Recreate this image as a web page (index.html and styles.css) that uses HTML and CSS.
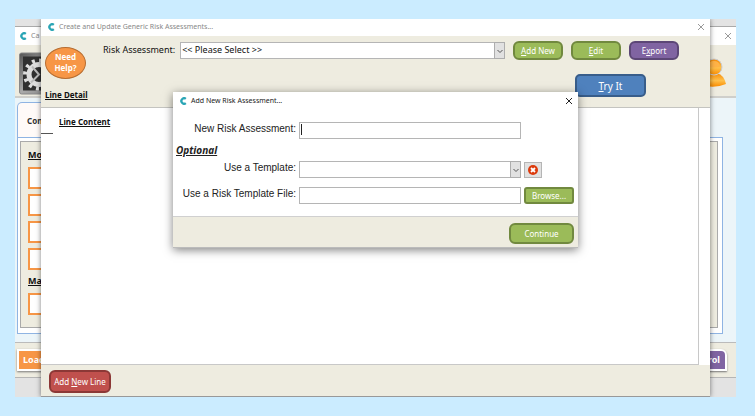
FILE: index.html
```html
<!DOCTYPE html>
<html lang="en">
<head>
<meta charset="UTF-8">
<meta name="viewport" content="width=device-width, initial-scale=1.0">
<title>Create and Update Generic Risk Assessments</title>
<link rel="stylesheet" href="styles.css">
</head>
<body>
    <div class="desktop">

        <!-- Window at the back -->
        <div class="window back-window">
            <div class="titlebar back-title">
                <svg class="logo" viewBox="0 0 8 8"><path d="M6.8 1.9A2.7 2.7 0 1 0 6.8 6.1" fill="none" stroke="#2aa5b5" stroke-width="2.3"/></svg>
                <span class="title">Ca</span>
                <button class="close" aria-label="Close"><svg viewBox="0 0 8 8"><path d="M1 1L7 7M7 1L1 7"/></svg></button>
            </div>
            <div class="back-header">
                <svg class="gear" viewBox="0 0 42 42">
                    <defs>
                        <linearGradient id="frame" x1="0" y1="0" x2="1" y2="1"><stop offset="0" stop-color="#555"/><stop offset="0.5" stop-color="#aaa"/><stop offset="1" stop-color="#777"/></linearGradient>
                    </defs>
                    <rect x="0.5" y="0.5" width="41" height="41" rx="2" fill="url(#frame)" stroke="#888"/>
                    <rect x="4" y="4" width="34" height="34" fill="#303030"/>
                    <circle cx="20" cy="22" r="10" fill="none" stroke="#ddd" stroke-width="5"/>
                    <circle cx="20" cy="22" r="14" fill="none" stroke="#ddd" stroke-width="4" stroke-dasharray="3 4.3"/>
                    <path d="M13 14L20 22L12 30" fill="none" stroke="#bbb" stroke-width="2"/>
                </svg>
                <svg class="user" viewBox="0 0 28 30">
                    <defs>
                        <linearGradient id="orange" x1="0" y1="0" x2="0" y2="1"><stop offset="0" stop-color="#f58a07"/><stop offset="0.55" stop-color="#ffc04a"/><stop offset="1" stop-color="#fb8c00"/></linearGradient>
                    </defs>
                    <path d="M2 27Q5 17 11 15H17Q24 17 26 26Q14 31 2 27Z" fill="url(#orange)"/>
                    <circle cx="14" cy="9" r="8" fill="url(#orange)" stroke="#c9ccd2"/>
                    <path d="M8 8Q9 3 14 3T20 8Q14 11 8 8Z" fill="#ffb347"/>
                </svg>
            </div>
            <div class="back-body">
                <div class="tab">Con</div>
                <div class="tab-panel">
                    <div class="tab-page">
                        <h3 class="group-title">Mo</h3>
                        <div class="tile"></div>
                        <div class="tile"></div>
                        <div class="tile"></div>
                        <div class="tile"></div>
                        <h3 class="group-title">Ma</h3>
                        <div class="tile"></div>
                    </div>
                </div>
            </div>
            <div class="back-footer">
                <button class="flat-button load">Load</button>
                <button class="flat-button control">Control</button>
            </div>
        </div>

        <!-- Main window -->
        <div class="window main-window">
            <div class="titlebar">
                <svg class="logo" viewBox="0 0 8 8"><path d="M6.8 1.9A2.7 2.7 0 1 0 6.8 6.1" fill="none" stroke="#2aa5b5" stroke-width="2.3"/></svg>
                <span class="title">Create and Update Generic Risk Assessments...</span>
                <button class="close" aria-label="Close"><svg viewBox="0 0 8 8"><path d="M1 1L7 7M7 1L1 7"/></svg></button>
            </div>
            <div class="header">
                <div class="left-side">
                    <button class="help">Need<br>Help?</button>
                    <h2 class="heading">Line Detail</h2>
                </div>
                <div class="right-side">
                    <div class="toolbar">
                        <label class="main-label" for="assessment">Risk Assessment:</label>
                        <div class="select-box">
                            <select id="assessment" class="field"><option>&lt;&lt; Please Select &gt;&gt;</option></select>
                            <span class="arrow"><svg viewBox="0 0 8 8"><path d="M1.5 3L4 5.5L6.5 3"/></svg></span>
                        </div>
                        <button class="button green"><u>A</u>dd New</button>
                        <button class="button green"><u>E</u>dit</button>
                        <button class="button purple">E<u>x</u>port</button>
                    </div>
                    <button class="button blue"><u>T</u>ry It</button>
                </div>
            </div>
            <div class="list">
                <h2 class="heading">Line Content</h2>
                <div class="rule"></div>
            </div>
            <div class="footer">
                <button class="button red">Add <u>N</u>ew Line</button>
            </div>
        </div>

        <!-- Dialog -->
        <div class="window dialog" role="dialog" aria-labelledby="dialogTitle">
            <div class="titlebar">
                <svg class="logo" viewBox="0 0 8 8"><path d="M6.8 1.9A2.7 2.7 0 1 0 6.8 6.1" fill="none" stroke="#2aa5b5" stroke-width="2.3"/></svg>
                <span class="title" id="dialogTitle">Add New Risk Assessment...</span>
                <button class="close" aria-label="Close"><svg viewBox="0 0 8 8"><path d="M1 1L7 7M7 1L1 7"/></svg></button>
            </div>
            <form class="form">
                <label for="name">New Risk Assessment:</label>
                <div class="name-box"><input type="text" id="name" class="field"><span class="caret"></span></div>
                <h3 class="optional">Optional</h3>
                <label for="template">Use a Template:</label>
                <div class="select-box">
                    <select id="template" class="field"><option></option></select>
                    <span class="arrow"><svg viewBox="0 0 8 8"><path d="M1.5 3L4 5.5L6.5 3"/></svg></span>
                </div>
                <button type="button" class="clear" aria-label="Clear template"><svg viewBox="0 0 10 10"><circle cx="5" cy="5" r="5" fill="#dc3a0c"/><path d="M3 3L7 7M7 3L3 7" stroke="#fff" stroke-width="1.8"/></svg></button>
                <label for="file">Use a Risk Template File:</label>
                <input type="text" id="file" class="field">
                <button type="button" class="button green browse">Browse...</button>
            </form>
            <div class="dialog-footer">
                <button class="button green continue">Continue</button>
            </div>
        </div>
    </div>
</body>
</html>
```
FILE: styles.css
```css
* {
    box-sizing: border-box;
}

body {
    margin: 0;
    padding: 19px 19px 19px 15px;
    background-color: #cbecff;
    font-family: "Noto Sans", "Open Sans", sans-serif;
    font-size: 9px;
    line-height: 12px;
    color: #111;
}

h2, h3 {
    margin: 0;
    font-size: 9px;
    line-height: 12px;
    text-decoration: underline;
}

button {
    font-family: inherit;
    font-size: 9px;
    line-height: 12px;
    padding: 0;
    cursor: pointer;
}

.desktop {
    position: relative;
    padding: 0 26px;
    background-color: #e3e3e3;
}

.window {
    display: flex;
    flex-direction: column;
}

.titlebar {
    display: flex;
    align-items: center;
    height: 17px;
    padding: 0 5px 2px 6px;
    background-color: #fff;
    color: #888;
    font-size: 7px;
}

.logo {
    width: 8px;
    height: 8px;
    margin-right: 4px;
}

.close {
    display: flex;
    width: 8px;
    height: 8px;
    margin-left: auto;
    border: none;
    background: none;
}

.close svg {
    width: 8px;
    height: 8px;
    stroke: #999;
    stroke-width: 1;
}

/* back window */
.back-window {
    position: absolute;
    top: 7px;
    right: 0;
    bottom: 19px;
    left: 0;
    border-top: 1px solid #aaa;
    border-bottom: 1px solid #b5b5b5;
}

.back-title {
    height: 18px;
    padding: 0 4px;
}

.back-header {
    display: flex;
    justify-content: space-between;
    height: 54px;
    padding: 7px 8px 0 4px;
    background-color: #eeece0;
    border-bottom: 2px solid #cfcfcb;
}

.gear {
    width: 42px;
    height: 43px;
}

.user {
    width: 28px;
    height: 30px;
    margin-top: 6px;
}

.back-body {
    flex: 1;
    display: flex;
    flex-direction: column;
    padding: 4px 13px 8px 2px;
    background-color: #ecf5f9;
}

.tab {
    width: 70px;
    height: 35px;
    padding: 12px 0 0 9px;
    background-color: #fffaf8;
    border: 1px solid #8fb4e3;
    border-bottom: none;
    border-radius: 5px 5px 0 0;
    font-weight: bold;
    font-size: 8px;
    color: #333;
}

.tab-panel {
    flex: 1;
    display: flex;
    padding: 3px 4px 5px 2px;
    background-color: #fff;
    border: 1px solid #8fb4e3;
}

.tab-page {
    flex: 1;
    padding: 7px;
    background-color: #eeece0;
    border: 1px solid #aaa;
}

.tab-page .group-title {
    margin-bottom: 6px;
}

.tile {
    width: 60px;
    height: 22px;
    margin-bottom: 5px;
    background-color: #fff;
    border: 2px solid #f79646;
}

.back-footer {
    display: flex;
    justify-content: space-between;
    align-items: center;
    height: 36px;
    padding: 0 9px 0 2px;
    background-color: #eeece0;
    border-top: 1px solid #bbb;
}

.flat-button {
    width: 60px;
    height: 22px;
    border: 2px solid #fff;
    color: #fff;
    font-weight: bold;
    box-shadow: 0 1px 2px #777;
}

.load {
    padding-left: 4px;
    background-color: #f79646;
    text-align: left;
}

.control {
    padding-right: 5px;
    background-color: #8064a2;
    text-align: right;
    border-top-right-radius: 6px;
}

/* main window */
.main-window {
    position: relative;
    background-color: #fff;
    border-bottom: 1px solid #999;
    box-shadow: 0 0 5px rgba(0, 0, 0, 0.5);
    clip-path: inset(0 -8px 0 -8px);
}

.header {
    display: flex;
    height: 72px;
    padding: 0 31px 0 4px;
    background-color: #eeece0;
    border-bottom: 1px solid #c4c4c0;
}

.left-side {
    width: 58px;
    padding-top: 11px;
}

.help {
    width: 41px;
    height: 32px;
    margin-bottom: 10px;
    padding-bottom: 2px;
    border: 1px solid #b66d31;
    border-radius: 50%;
    background-color: #f79646;
    color: #fff;
    font-size: 8px;
    font-weight: bold;
    line-height: 11px;
}

.heading {
    font-size: 8px;
    white-space: nowrap;
}

.right-side {
    flex: 1;
    padding-top: 5px;
}

.toolbar {
    display: flex;
    align-items: center;
    gap: 8px;
    margin-bottom: 14px;
}

.main-label {
    margin-right: -3px;
    padding-bottom: 2px;
    white-space: nowrap;
}

.field {
    display: block;
    width: 100%;
    height: 17px;
    padding: 0 1px 2px;
    background-color: #fff;
    border: 1px solid #b5b5b5;
    border-radius: 0;
    font-family: inherit;
    font-size: 9px;
    color: #111;
    appearance: none;
    outline: none;
}

.select-box {
    position: relative;
    flex: 1;
}

.arrow {
    position: absolute;
    top: 0;
    right: 0;
    bottom: 0;
    display: flex;
    align-items: center;
    width: 11px;
    padding-left: 1px;
    background-color: #e1e1e1;
    border: 1px solid #adadad;
    pointer-events: none;
}

.arrow svg {
    width: 8px;
    height: 8px;
    fill: none;
    stroke: #555;
}

.button {
    width: 50px;
    height: 19px;
    border: 2px solid;
    border-radius: 6px;
    color: #fff;
    font-size: 8px;
    white-space: nowrap;
}

.green {
    background-color: #9bbb59;
    border-color: #71893f;
}

.purple {
    background-color: #8064a2;
    border-color: #5c4776;
}

.blue {
    display: block;
    width: 71px;
    height: 23px;
    margin: 0 33px 0 auto;
    background-color: #4f81bd;
    border-color: #385d8a;
    border-radius: 5px;
    font-size: 10px;
}

.red {
    width: 62px;
    height: 23px;
    background-color: #c0504d;
    border-color: #8c3836;
}

.list {
    height: 257px;
    margin-right: 11px;
    padding-top: 8px;
    border-right: 1px solid #c8c8c8;
    border-bottom: 1px solid #c8c8c8;
}

.list .heading {
    margin-left: 18px;
}

.rule {
    width: 12px;
    height: 6px;
    border-bottom: 1px solid #555;
}

.footer {
    height: 31px;
    padding: 5px 8px;
    background-color: #eeece0;
}

/* dialog */
.dialog {
    position: absolute;
    top: 73px;
    right: 158px;
    left: 158px;
    background-color: #fff;
    border-bottom: 1px solid #bbb;
    box-shadow: 0 2px 9px rgba(0, 0, 0, 0.5);
}

.dialog .titlebar {
    padding-bottom: 0;
    color: #222;
}

.dialog .close svg {
    stroke: #222;
}

.form {
    display: grid;
    grid-template-columns: 119px 1fr 50px;
    column-gap: 3px;
    row-gap: 9px;
    align-items: center;
    padding: 13px 4px 12px;
    font-family: "Liberation Sans", Arial, sans-serif;
    font-size: 10px;
    color: #222;
}

.form label {
    padding-bottom: 4px;
    text-align: right;
    white-space: nowrap;
}

.form .field {
    margin-left: 0;
}

.name-box {
    position: relative;
}

.form .optional {
    grid-column: 1 / -1;
    margin: -4px 0 -4px -1px;
    font-family: "Noto Sans", "Open Sans", sans-serif;
    font-size: 10px;
    font-style: italic;
}

.caret {
    position: absolute;
    top: 2px;
    left: 2px;
    width: 1px;
    height: 11px;
    background-color: #222;
}

.clear {
    display: flex;
    align-items: center;
    justify-content: center;
    width: 18px;
    height: 16px;
    background-color: #e1e1e1;
    border: 1px solid #b5b5b5;
}

.clear svg {
    width: 10px;
    height: 10px;
}

.browse {
    width: 50px;
    height: 17px;
    border-radius: 3px;
    font-family: "Noto Sans", "Open Sans", sans-serif;
    line-height: 10px;
}

.dialog-footer {
    display: flex;
    justify-content: flex-end;
    padding: 6px 4px 3px;
    background-color: #eeece0;
    border-top: 1px solid #d0d0d0;
}

.continue {
    width: 65px;
    height: 21px;
}
```
